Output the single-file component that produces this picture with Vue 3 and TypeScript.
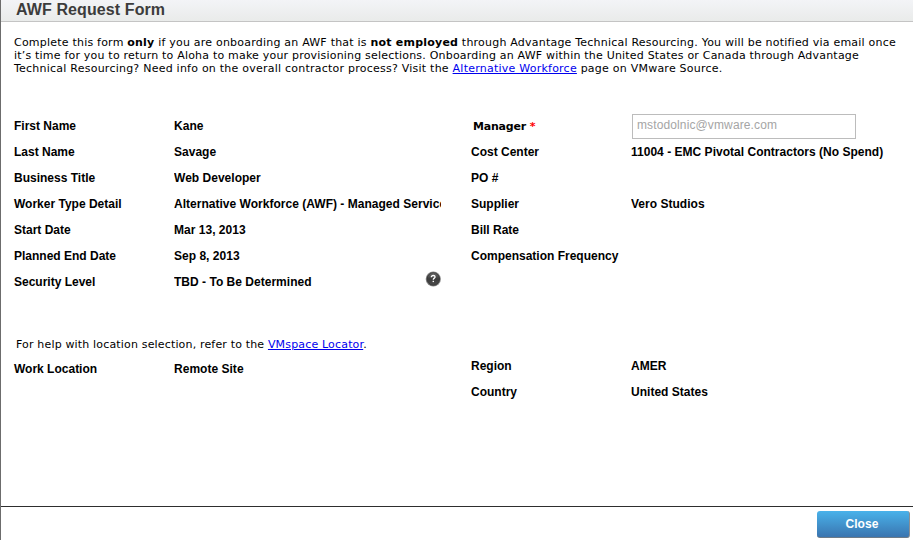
<script setup lang="ts">
interface Field {
  label: string
  value: string
  help?: boolean
}

const worker: Field[] = [
  { label: 'First Name', value: 'Kane' },
  { label: 'Last Name', value: 'Savage' },
  { label: 'Business Title', value: 'Web Developer' },
  { label: 'Worker Type Detail', value: 'Alternative Workforce (AWF) - Managed Services' },
  { label: 'Start Date', value: 'Mar 13, 2013' },
  { label: 'Planned End Date', value: 'Sep 8, 2013' },
  { label: 'Security Level', value: 'TBD - To Be Determined', help: true },
]

const billing: Field[] = [
  { label: 'Cost Center', value: '11004 - EMC Pivotal Contractors (No Spend)' },
  { label: 'PO #', value: '' },
  { label: 'Supplier', value: 'Vero Studios' },
  { label: 'Bill Rate', value: '' },
  { label: 'Compensation Frequency', value: '' },
]

const region: Field[] = [
  { label: 'Region', value: 'AMER' },
  { label: 'Country', value: 'United States' },
]
</script>

<template>
  <div class="dialog">
    <header class="title-bar"><h1>AWF Request Form</h1></header>
    <main class="body">
      <div class="intro">
        <div class="first">Complete this form <b>only</b> if you are onboarding an AWF that is <b>not employed</b> through Advantage Technical Resourcing. You will be notified via email once</div>
        <div>it’s time for you to return to Aloha to make your provisioning selections. Onboarding an AWF within the United States or Canada through Advantage</div>
        <div class="last">Technical Resourcing? Need info on the overall contractor process? Visit the <a href="#">Alternative Workforce</a> page on VMware Source.</div>
      </div>
      <section class="columns">
        <div class="column">
          <div v-for="f in worker" :key="f.label" class="row">
            <span class="label">{{ f.label }}</span>
            <span class="value">{{ f.value }}</span>
            <svg v-if="f.help" class="help" viewBox="0 0 16 16" width="16" height="16">
              <defs>
                <linearGradient id="helpFill" x1="0" y1="0" x2="0" y2="1">
                  <stop offset="0" stop-color="#6a6a6a" />
                  <stop offset="0.5" stop-color="#3c3c3c" />
                  <stop offset="1" stop-color="#4c4c4c" />
                </linearGradient>
              </defs>
              <circle cx="8.3" cy="8" r="7.6" fill="#858585" />
              <circle cx="8.3" cy="8" r="6.3" fill="url(#helpFill)" stroke="#333" stroke-width="0.8" />
              <path d="M6.3 6.2C6.3 5 7.1 4.5 8.2 4.5C9.4 4.5 10.1 5.1 10.1 6C10.1 7.2 8.3 7.1 8.3 8.7" fill="none" stroke="#fff" stroke-width="1.3" />
              <rect x="7.6" y="9.8" width="1.4" height="1.3" fill="#fff" />
            </svg>
          </div>
        </div>
        <div class="column">
          <div class="row">
            <label class="label manager" for="manager">Manager <span class="required">*</span></label>
            <input id="manager" class="input" type="text" value="mstodolnic@vmware.com" disabled />
          </div>
          <div v-for="f in billing" :key="f.label" class="row">
            <span class="label">{{ f.label }}</span>
            <span class="value">{{ f.value }}</span>
          </div>
        </div>
      </section>
      <section class="columns location">
        <div class="column">
          <p class="hint">For help with location selection, refer to the <a href="#">VMspace Locator</a>.</p>
          <div class="row">
            <span class="label">Work Location</span>
            <span class="value">Remote Site</span>
          </div>
        </div>
        <div class="column region">
          <div v-for="f in region" :key="f.label" class="row">
            <span class="label">{{ f.label }}</span>
            <span class="value">{{ f.value }}</span>
          </div>
        </div>
      </section>
    </main>
    <footer class="footer"><button class="close" type="button">Close</button></footer>
  </div>
</template>

<style>
body {
  margin: 0;
  overflow: hidden;
  background: #fff;
}
</style>

<style scoped>
.dialog {
  display: flex;
  flex-direction: column;
  box-sizing: border-box;
  width: 913px;
  height: 540px;
  overflow: hidden;
  border-left: 1px solid #6c6c6c;
  background: #fff;
  color: #000;
  font: bold 12px/26px "Liberation Sans", Arial, sans-serif;
}
.title-bar {
  flex: none;
  box-sizing: border-box;
  height: 22px;
  padding-left: 15px;
  border-bottom: 1px solid #c4c4c4;
  background: linear-gradient(#f3f4f7, #e9ebea);
}
h1 {
  margin: 0;
  color: #3c3c3c;
  font-size: 16px;
  line-height: 19px;
  letter-spacing: 0.1px;
}
.body {
  flex: 1;
  padding: 14px 0 0 13px;
}
.intro,
.hint {
  font: 11px/13px Verdana, "DejaVu Sans", sans-serif;
  letter-spacing: 0.2px;
  white-space: nowrap;
}
.first {
  letter-spacing: 0.214px;
}
.last {
  letter-spacing: 0.234px;
}
a {
  color: #00e;
  text-decoration: underline;
}
.columns {
  display: grid;
  grid-template-columns: 457px 440px;
  margin-top: 38px;
}
.row {
  display: flex;
  height: 26px;
}
.label {
  flex: none;
  width: 160px;
  white-space: nowrap;
}
.value {
  flex: none;
  width: 267px;
  overflow: hidden;
  letter-spacing: 0.02px;
  white-space: nowrap;
}
.help {
  flex: none;
  margin: 2px 0 0 -16px;
}
.manager {
  box-sizing: border-box;
  padding-left: 2px;
  font: bold 11px/28px Verdana, "DejaVu Sans", sans-serif;
  letter-spacing: -0.2px;
}
.required {
  color: #f00;
}
.input {
  box-sizing: border-box;
  width: 224px;
  height: 25px;
  margin: 1px 0 0 1px;
  padding: 0 4px 3px;
  border: 1px solid #bcbcbc;
  background: #fff;
  color: #a5a5a5;
  font: 12px "Liberation Sans", Arial, sans-serif;
  letter-spacing: 0.12px;
}
.location {
  margin-top: 43px;
}
.hint {
  margin: 0 0 5px 2px;
  letter-spacing: 0.165px;
}
.region {
  padding-top: 15px;
}
.footer {
  display: flex;
  flex: none;
  justify-content: flex-end;
  box-sizing: border-box;
  height: 34px;
  padding: 4px 3px 0 0;
  border-top: 1px solid #2e2e2e;
}
.close {
  box-sizing: border-box;
  width: 93px;
  height: 27px;
  padding: 0 2px 1px 0;
  border: 0;
  border-right: 1px solid #8a8f94;
  border-bottom: 1px solid #6d7b88;
  border-radius: 3px;
  background: linear-gradient(#49b2ea, #3a75b0);
  color: #fff;
  font: bold 12px "Liberation Sans", Arial, sans-serif;
  letter-spacing: 0.1px;
}
</style>
